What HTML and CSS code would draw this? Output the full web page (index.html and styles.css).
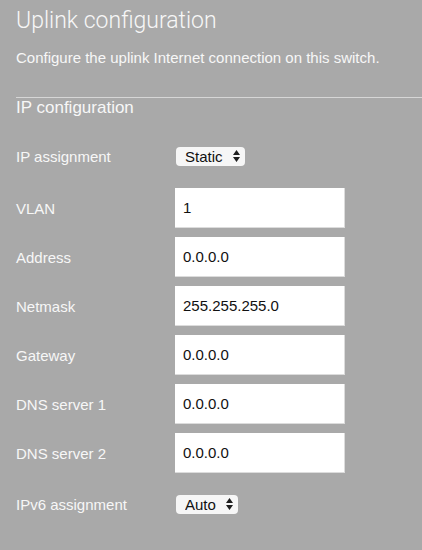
FILE: index.html
```html
<!DOCTYPE html>
<html lang="en">
  <head>
    <meta charset="UTF-8" />
    <meta name="viewport" content="width=device-width, initial-scale=1.0" />
    <title>Uplink configuration</title>
    <link rel="stylesheet" href="styles.css">
  </head>
  <body>
    <h1>Uplink configuration</h1>
    <p class="lead">Configure the uplink Internet connection on this switch.</p>

    <section class="group">
      <h2>IP configuration</h2>

      <form class="fields">
        <div class="row row-select">
          <label for="ip_mode">IP assignment</label>
          <span class="select">
            <select id="ip_mode" name="ip_mode">
              <option>Static</option>
              <option>Auto</option>
            </select>
            <svg class="arrows" width="7" height="12" viewBox="0 0 7 12"><path d="M3.5 0L7 5H0z M0 7h7l-3.5 5z" fill="#1e1e1e"/></svg>
          </span>
        </div>

        <div class="row">
          <label for="vlan">VLAN</label>
          <input type="text" id="vlan" name="vlan" value="1" />
        </div>
        <div class="row">
          <label for="address">Address</label>
          <input type="text" id="address" name="address" value="0.0.0.0" />
        </div>
        <div class="row">
          <label for="netmask">Netmask</label>
          <input type="text" id="netmask" name="netmask" value="255.255.255.0" />
        </div>
        <div class="row">
          <label for="gateway">Gateway</label>
          <input type="text" id="gateway" name="gateway" value="0.0.0.0" />
        </div>
        <div class="row">
          <label for="dns1">DNS server 1</label>
          <input type="text" id="dns1" name="dns1" value="0.0.0.0" />
        </div>
        <div class="row">
          <label for="dns2">DNS server 2</label>
          <input type="text" id="dns2" name="dns2" value="0.0.0.0" />
        </div>

        <div class="row row-select">
          <label for="ipv6_mode">IPv6 assignment</label>
          <span class="select">
            <select id="ipv6_mode" name="ipv6_mode">
              <option>Auto</option>
              <option>Off</option>
            </select>
            <svg class="arrows" width="7" height="12" viewBox="0 0 7 12"><path d="M3.5 0L7 5H0z M0 7h7l-3.5 5z" fill="#1e1e1e"/></svg>
          </span>
        </div>
      </form>
    </section>
  </body>
</html>
```

FILE: styles.css
```css
html {
  box-sizing: border-box;
  font-size: 15px;
}

*,
*:before,
*:after {
  box-sizing: inherit;
}

body,
h1,
h2,
p,
form {
  margin: 0;
  padding: 0;
  font-weight: normal;
}

body {
  font-family: "Liberation Sans", Arial, sans-serif;
  background-color: #a9a9a9;
  color: #f7f7f7;
  padding: 7px 0 0 16px;
}

h1 {
  font-family: Roboto, "Liberation Sans", sans-serif;
  font-weight: 300;
  font-size: 23px;
  line-height: 27px;
}

.lead {
  font-size: 15px;
  line-height: 20px;
  margin: 14px 0 29px;
}

.group {
  border-top: 1px solid #d6d6d6;

  h2 {
    font-size: 17px;
    line-height: 20px;
  }
}

.fields {
  display: flex;
  flex-direction: column;
  gap: 9px;
  margin-top: 29px;
}

.row {
  display: flex;
  align-items: center;

  label {
    width: 159px;
    font-size: 15px;
  }

  input {
    width: 170px;
    height: 40px;
    border: none;
    border-right: 1px solid #dcdcdc;
    border-bottom: 1px solid #dcdcdc;
    border-radius: 0;
    background: white;
    color: #111;
    font-family: inherit;
    font-size: 15px;
    padding: 0 8px;
    margin: 0;
    outline: none;
  }
}

.row-select {
  height: 19px;
}

.row-select:last-child {
  margin-top: 13px;
}

.row-select:first-child {
  margin-bottom: 13px;
}

.select {
  position: relative;
  display: inline-block;
  margin-left: 1px;

  select {
    appearance: none;
    -webkit-appearance: none;
    border: none;
    border-radius: 4px;
    background: #f6f6f6;
    color: #111;
    font-family: inherit;
    font-size: 15px;
    height: 19px;
    line-height: 19px;
    padding: 0 22px 0 9px;
    margin: 0;
  }

  .arrows {
    position: absolute;
    right: 5px;
    top: 3px;
    pointer-events: none;
  }
}
```
